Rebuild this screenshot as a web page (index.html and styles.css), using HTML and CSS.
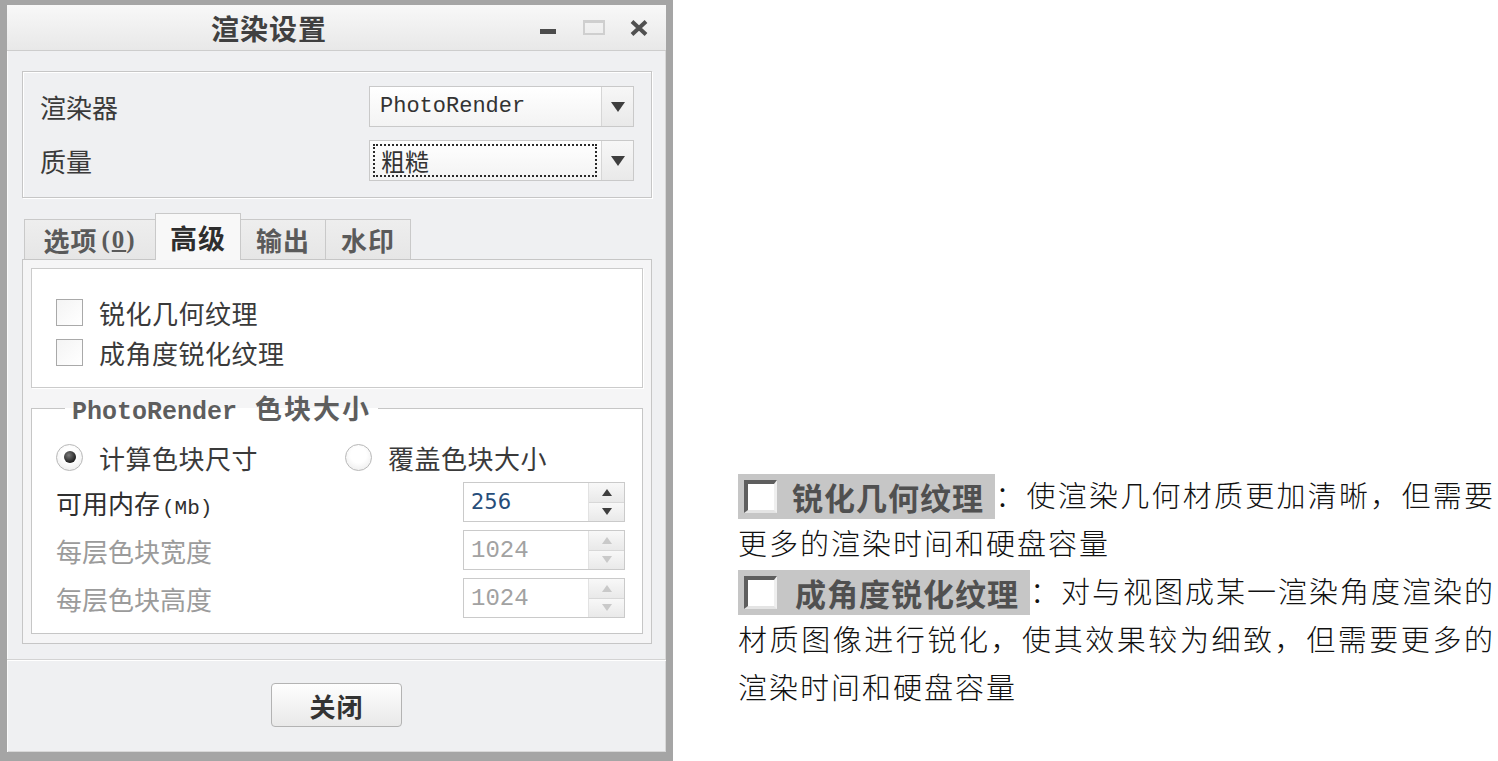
FILE: index.html
```html
<!DOCTYPE html>
<html lang="zh-CN">
<head>
<meta charset="utf-8">
<title>渲染设置</title>
<link rel="stylesheet" href="styles.css">
</head>
<body>
<div class="page">
  <div class="dialog">
    <div class="titlebar">
      <div class="title">渲染设置</div>
      <div class="winbtns">
        <span class="wb-min"></span>
        <span class="wb-max"></span>
        <svg class="wb-close" width="18" height="16" viewBox="0 0 18 16"><path d="M2 1.5 L16 14.5 M16 1.5 L2 14.5" stroke="#505050" stroke-width="4" fill="none"/></svg>
      </div>
    </div>
    <div class="body">
      <div class="group">
        <div class="row">
          <span class="lbl">渲染器</span>
          <div class="combo">
            <div class="combo-val mono">PhotoRender</div>
            <div class="combo-btn"><svg width="14" height="10" viewBox="0 0 14 10"><path d="M0 0 H14 L7 10 Z" fill="#3e3e3e"/></svg></div>
          </div>
        </div>
        <div class="row">
          <span class="lbl">质量</span>
          <div class="combo">
            <div class="combo-val"><span class="focus">粗糙</span></div>
            <div class="combo-btn"><svg width="14" height="10" viewBox="0 0 14 10"><path d="M0 0 H14 L7 10 Z" fill="#3e3e3e"/></svg></div>
          </div>
        </div>
      </div>
      <div class="tabs">
        <div class="tab t1">选项 <span class="paren">(<u>0</u>)</span></div>
        <div class="tab active">高级</div>
        <div class="tab">输出</div>
        <div class="tab">水印</div>
      </div>
      <div class="panel">
        <div class="checks">
          <div class="chk"><span class="cbox"></span><span>锐化几何纹理</span></div>
          <div class="chk"><span class="cbox"></span><span>成角度锐化纹理</span></div>
        </div>
        <fieldset class="fs">
          <legend><span class="lg-mono">PhotoRender</span><span class="lg-cjk">色块大小</span></legend>
          <div class="radios">
            <div class="radio r1"><span class="rdot on"></span><span>计算色块尺寸</span></div>
            <div class="radio"><span class="rdot"></span><span>覆盖色块大小</span></div>
          </div>
          <div class="frow">
            <span class="flbl">可用内存<span class="mb">(Mb)</span></span>
            <div class="spin">
              <div class="spin-val blue">256</div>
              <div class="spin-btns">
                <span class="sb"><svg width="10" height="7" viewBox="0 0 10 7"><path d="M5 0 L10 7 H0 Z" fill="#3e3e3e"/></svg></span>
                <span class="sb"><svg width="10" height="7" viewBox="0 0 10 7"><path d="M0 0 H10 L5 7 Z" fill="#3e3e3e"/></svg></span>
              </div>
            </div>
          </div>
          <div class="frow">
            <span class="flbl dis">每层色块宽度</span>
            <div class="spin">
              <div class="spin-val grey">1024</div>
              <div class="spin-btns">
                <span class="sb"><svg width="10" height="7" viewBox="0 0 10 7"><path d="M5 0 L10 7 H0 Z" fill="#c9c9c9"/></svg></span>
                <span class="sb"><svg width="10" height="7" viewBox="0 0 10 7"><path d="M0 0 H10 L5 7 Z" fill="#c9c9c9"/></svg></span>
              </div>
            </div>
          </div>
          <div class="frow">
            <span class="flbl dis">每层色块高度</span>
            <div class="spin">
              <div class="spin-val grey">1024</div>
              <div class="spin-btns">
                <span class="sb"><svg width="10" height="7" viewBox="0 0 10 7"><path d="M5 0 L10 7 H0 Z" fill="#c9c9c9"/></svg></span>
                <span class="sb"><svg width="10" height="7" viewBox="0 0 10 7"><path d="M0 0 H10 L5 7 Z" fill="#c9c9c9"/></svg></span>
              </div>
            </div>
          </div>
        </fieldset>
      </div>
    </div>
    <div class="footer">
      <button class="closebtn">关闭</button>
    </div>
  </div>

  <div class="notes">
    <div class="ln full"><span class="tag"><span class="tagbox"></span><span>锐化几何纹理</span></span>：使渲染几何材质更加清晰，但需要</div>
    <div class="ln">更多的渲染时间和硬盘容量</div>
    <div class="ln full"><span class="tag t2"><span class="tagbox"></span><span>成角度锐化纹理</span></span>：对与视图成某一渲染角度渲染的</div>
    <div class="ln full">材质图像进行锐化，使其效果较为细致，但需要更多的</div>
    <div class="ln">渲染时间和硬盘容量</div>
  </div>
</div>
</body>
</html>
```

FILE: styles.css
```css
* { box-sizing: border-box; margin: 0; padding: 0; }
body {
  margin: 0;
  background: #ffffff;
  font-family: "Noto Sans CJK SC", sans-serif;
}
.page {
  display: flex;
  align-items: flex-start;
  width: 1498px;
  height: 761px;
  overflow: hidden;
}

/* ---------- dialog ---------- */
.dialog {
  flex: none;
  width: 673px;
  height: 761px;
  border-style: solid;
  border-color: #a5a5a5;
  border-width: 5px 7px 9px 7px;
  background: #eff0f2;
  display: flex;
  flex-direction: column;
  box-shadow: inset 1px 1px 0 #fbfbfb, inset -1px -1px 0 #d8d8d8;
}
.titlebar {
  flex: none;
  height: 46px;
  display: flex;
  align-items: center;
  background: linear-gradient(#f8f8f8, #e8e8e8);
  border-bottom: 1px solid #cdcdcd;
}
.title {
  flex: 1;
  text-align: center;
  font-weight: 700;
  font-size: 28px;
  letter-spacing: 1px;
  color: #404040;
}
.winbtns {
  flex: none;
  width: 135px;
  display: flex;
  align-items: center;
  padding-left: 9px;
}
.wb-min {
  width: 16px;
  height: 5px;
  background: #4c4c4c;
  margin-top: 8px;
}
.wb-max {
  width: 22px;
  height: 15px;
  border: 2px solid #cfcfcf;
  border-top-width: 3px;
  margin-left: 27px;
}
.wb-close {
  margin-left: 25px;
}

.body {
  flex: 1;
  display: flex;
  flex-direction: column;
  padding: 20px 14px 15px 15px;
}

.group {
  flex: none;
  height: 127px;
  border: 1px solid #c6c6c6;
  box-shadow: inset 1px 1px 0 #ffffff, 1px 1px 0 #ffffff;
  padding: 14px 17px 0 17px;
  display: flex;
  flex-direction: column;
  gap: 13px;
}
.row {
  display: flex;
  align-items: center;
  justify-content: space-between;
  height: 41px;
}
.lbl {
  font-size: 26px;
  color: #3a3a3a;
}
.combo {
  width: 265px;
  height: 41px;
  display: flex;
  border: 1px solid #c9c9c9;
  background: linear-gradient(#ffffff, #f3f3f3);
}
.combo-val {
  flex: 1;
  display: flex;
  align-items: center;
  padding-left: 10px;
  font-size: 24px;
  color: #333;
}
.combo-val.mono {
  font-family: "Liberation Mono", monospace;
  font-size: 22px;
}
.focus {
  display: flex;
  align-items: center;
  width: 224px;
  height: 33px;
  margin-left: -7px;
  padding-left: 6px;
  border: 2px dotted #2a2a2a;
  line-height: 1;
}
.combo-btn {
  width: 32px;
  display: flex;
  align-items: center;
  justify-content: center;
  border-left: 1px solid #d6d6d6;
  background: linear-gradient(#f7f7f7, #e9e9e9);
}

/* tabs */
.tabs {
  flex: none;
  margin-top: 15px;
  height: 46px;
  display: flex;
  align-items: flex-end;
  padding-left: 2px;
  position: relative;
  z-index: 1;
}
.tab {
  height: 40px;
  width: 86px;
  display: flex;
  align-items: center;
  justify-content: center;
  background: linear-gradient(#eeeeee, #e6e6e6);
  border: 1px solid #c9c9c9;
  border-bottom: none;
  margin-left: -1px;
  font-weight: 700;
  font-size: 26px;
  letter-spacing: 1px;
  color: #5a5a5a;
}
.tab.t1 {
  width: 132px;
  margin-left: 0;
}
.paren {
  font-family: "Liberation Serif", serif;
  font-size: 25px;
  margin-left: 4px;
  letter-spacing: 2px;
}
.paren u {
  text-underline-offset: 2px;
}
.tab.active {
  height: 47px;
  margin-bottom: -1px;
  background: #f8f8f8;
  color: #2e2e2e;
  font-size: 27px;
}

.panel {
  flex: 1;
  display: flex;
  flex-direction: column;
  border: 1px solid #c6c6c6;
  background: #f5f5f6;
  padding: 8px 8px 9px 8px;
}
.checks {
  flex: none;
  height: 120px;
  background: #ffffff;
  border: 1px solid #cbcbcb;
  box-shadow: 1px 1px 0 #ffffff;
  padding: 30px 0 0 24px;
  display: flex;
  flex-direction: column;
  gap: 13px;
}
.chk {
  height: 27px;
  display: flex;
  align-items: center;
  gap: 16px;
  font-size: 26px;
  color: #3a3a3a;
  letter-spacing: 0.5px;
}
.cbox {
  width: 27px;
  height: 27px;
  border: 1px solid #a9a9a9;
  background: linear-gradient(135deg, #f4f4f4, #ffffff);
}

.fs {
  flex: 1;
  margin-top: 5px;
  border: 1px solid #c6c6c6;
  background: #ffffff;
  padding: 0 17px 0 24px;
  min-width: 0;
}
.fs legend {
  margin-left: 9px;
  padding: 0 7px;
  height: 30px;
  line-height: 30px;
  font-weight: 700;
  color: #5e5e5e;
  white-space: nowrap;
}
.lg-mono {
  font-family: "Liberation Mono", monospace;
  font-size: 25px;
}
.lg-cjk {
  margin-left: 18px;
  font-size: 27px;
  letter-spacing: 2px;
}
.radios {
  display: flex;
  align-items: center;
  height: 30px;
  margin-top: 19px;
  margin-bottom: 10px;
}
.radio {
  display: flex;
  align-items: center;
  gap: 16px;
  font-size: 26px;
  color: #3a3a3a;
  letter-spacing: 0.5px;
}
.radio.r1 {
  width: 289px;
}
.rdot {
  width: 27px;
  height: 27px;
  border-radius: 50%;
  border: 1px solid #b8b8b8;
  background: radial-gradient(circle at 50% 40%, #ffffff 40%, #e6e6e6 100%);
  display: flex;
  align-items: center;
  justify-content: center;
}
.rdot.on::after {
  content: "";
  width: 12px;
  height: 12px;
  border-radius: 50%;
  background: radial-gradient(circle at 40% 35%, #7a7a7a, #202020 70%);
}
.frow {
  display: flex;
  align-items: center;
  justify-content: space-between;
  height: 40px;
  margin-bottom: 8px;
}
.flbl {
  font-size: 26px;
  color: #2f2f2f;
}
.flbl.dis {
  color: #9b9b9b;
}
.mb {
  font-family: "Liberation Mono", monospace;
  font-size: 21px;
  margin-left: 2px;
}
.spin {
  width: 162px;
  height: 40px;
  display: flex;
  border: 1px solid #cacaca;
  background: #ffffff;
}
.spin-val {
  flex: 1;
  display: flex;
  align-items: center;
  padding-left: 7px;
}
.spin-val.blue {
  font-family: "DejaVu Sans", sans-serif;
  font-size: 21px;
  color: #274d7a;
}
.spin-val.grey {
  font-family: "Liberation Mono", monospace;
  font-size: 24px;
  color: #a2a2a2;
}
.spin-btns {
  width: 36px;
  display: flex;
  flex-direction: column;
  border-left: 1px solid #e2e2e2;
}
.sb {
  flex: 1;
  display: flex;
  align-items: center;
  justify-content: center;
  background: linear-gradient(#f8f8f8, #e9e9e9);
}
.sb + .sb {
  border-top: 1px solid #d8d8d8;
}

.footer {
  flex: none;
  height: 93px;
  border-top: 1px solid #d3d3d3;
  box-shadow: inset 0 1px 0 #ffffff;
  display: flex;
  justify-content: center;
  padding-top: 23px;
}
.closebtn {
  width: 131px;
  height: 44px;
  border: 1px solid #b3b3b3;
  border-radius: 4px;
  background: linear-gradient(#fefefe, #e9e9e9);
  font-family: "Noto Sans CJK SC", sans-serif;
  font-weight: 700;
  font-size: 26px;
  letter-spacing: 1px;
  color: #333333;
}

/* ---------- notes ---------- */
.notes {
  flex: none;
  margin-left: 65px;
  padding-top: 473px;
  width: 757px;
  font-family: "Liberation Serif", "Noto Sans CJK SC", serif;
  font-weight: 300;
  font-size: 29px;
  letter-spacing: 2px;
  color: #111111;
}
.ln {
  height: 48px;
  line-height: 48px;
}
.ln.full {
  text-align: justify;
  text-align-last: justify;
}
.tag {
  display: inline-flex;
  align-items: center;
  vertical-align: middle;
  height: 45px;
  margin-top: -8px;
  background: #c6c6c6;
  padding: 0 11px 0 6px;
  gap: 15px;
  font-family: "Noto Sans CJK SC", sans-serif;
  font-weight: 700;
  font-size: 31px;
  letter-spacing: 1px;
  line-height: 1;
  color: #505050;
}
.tag.t2 {
  gap: 18px;
}
.tagbox {
  width: 33px;
  height: 33px;
  background: #ffffff;
  border-style: solid;
  border-width: 4px 3px 3px 4px;
  border-color: #5e5e5e #efefef #e4e4e4 #5e5e5e;
}
```
